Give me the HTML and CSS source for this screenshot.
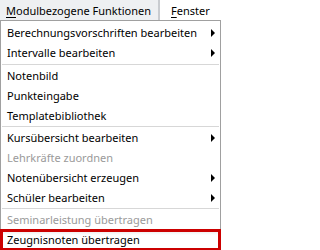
FILE: index.html
```html
<!DOCTYPE html>
<html lang="de">
<head>
<meta charset="utf-8">
<link rel="stylesheet" href="styles.css">
</head>
<body>
<div class="menubar">
  <div class="tab active"><u>M</u>odulbezogene Funktionen</div>
  <div class="tab"><u>F</u>enster</div>
</div>
<div class="dropdown">
  <div class="item sub">Berechnungsvorschriften bearbeiten</div>
  <div class="item sub">Intervalle bearbeiten</div>
  <div class="sep"></div>
  <div class="item">Notenbild</div>
  <div class="item">Punkteingabe</div>
  <div class="item">Templatebibliothek</div>
  <div class="sep thin"></div>
  <div class="item sub">Kursübersicht bearbeiten</div>
  <div class="item disabled">Lehrkräfte zuordnen</div>
  <div class="item sub">Notenübersicht erzeugen</div>
  <div class="item sub">Schüler bearbeiten</div>
  <div class="sep thin"></div>
  <div class="item disabled">Seminarleistung übertragen</div>
  <div class="item marked">Zeugnisnoten übertragen</div>
</div>
</body>
</html>
```

FILE: styles.css
```css
html, body {
  margin: 0;
  padding: 0;
  background: #ffffff;
}
body {
  width: 222px;
  height: 250px;
  overflow: hidden;
  font-family: "Noto Sans", "DejaVu Sans", sans-serif;
  font-size: 11px;
  color: #000000;
}
.menubar {
  display: flex;
  height: 20px;
  background: #ffffff;
}
.tab {
  display: flex;
  align-items: center;
  padding: 0 6px;
  white-space: nowrap;
}
.tab u {
  text-decoration: underline;
  text-underline-offset: 2px;
}
.tab.active {
  box-sizing: border-box;
  width: 160px;
  background: #eef0f2;
  border-right: 2px solid #c9ccd0;
  padding: 0 4px 0 6px;
}
.tab + .tab {
  margin-left: 5px;
}
.dropdown {
  width: 219px;
  border: 1px solid #a0a0a0;
  border-bottom: none;
  padding-top: 2px;
  background: #ffffff;
}
.item {
  position: relative;
  height: 20px;
  line-height: 20px;
  padding-left: 6px;
  white-space: nowrap;
}
.item.sub::after {
  content: "";
  position: absolute;
  left: 210px;
  top: 6px;
  border-left: 4px solid #000000;
  border-top: 4px solid transparent;
  border-bottom: 4px solid transparent;
}
.item.disabled {
  color: #9a9a9a;
}
.sep {
  height: 1px;
  margin: 1px 1px 1px;
  background: #d7d7d7;
}
.sep.thin {
  margin-top: 0;
}
.item.marked {
  background: linear-gradient(#e6e6e6, #ffffff 5px);
  outline: 3px solid #cc0000;
  outline-offset: -2px;
}
```
